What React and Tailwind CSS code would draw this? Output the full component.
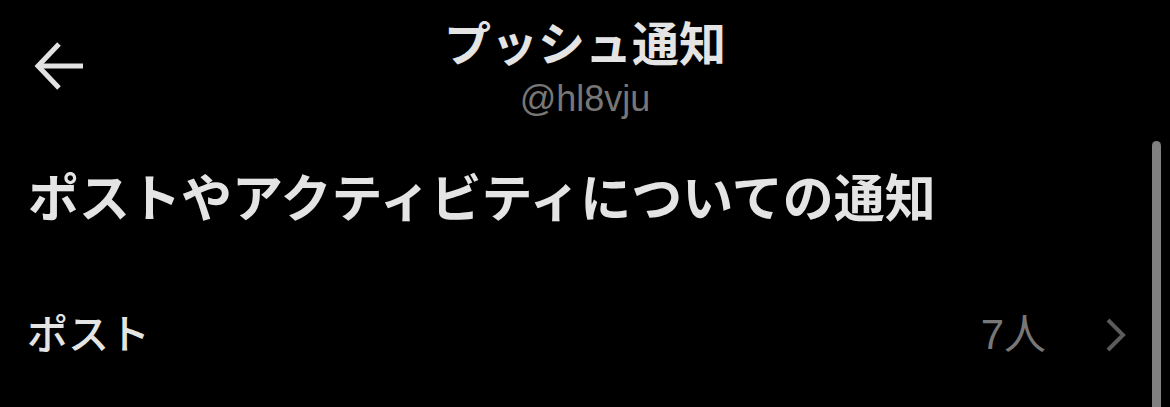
import React from 'react';

const font = { fontFamily: '"Liberation Sans", "Noto Sans CJK JP", sans-serif' };

const BackArrow = () => (
  <svg width="54" height="50" viewBox="0 0 54 50" fill="none" stroke="#e2e2e2" strokeWidth="5" strokeLinecap="butt">
    <path d="M50 24H6" />
    <path d="M26 2L5 24L26 46" />
  </svg>
);

const Chevron = () => (
  <svg width="24" height="36" viewBox="0 0 24 36" fill="none" stroke="#5b5b5b" strokeWidth="4">
    <path d="M4 3L19 18L4 33" />
  </svg>
);

export default function App() {
  return (
    <div className="relative w-[1170px] h-[407px] bg-black overflow-hidden text-[#e4e4e4]" style={font}>
      <div className="grid grid-cols-[1fr_auto_1fr] items-start pt-[16px]">
        <div className="pl-[33px] pt-[26px]">
          <BackArrow />
        </div>
        <div className="flex flex-col items-center">
          <div className="text-[47px] font-bold leading-[58px]">プッシュ通知</div>
          <div className="text-[36px] leading-[40px] text-[#777777] mt-[5px]">@hl8vju</div>
        </div>
        <div />
      </div>

      <div className="px-[28px] pt-[51px]">
        <div className="text-[51px] font-bold leading-[60px]">ポストやアクティビティについての通知</div>
      </div>

      <div className="flex items-center justify-between pl-[27px] pr-[42px] mt-[80px]">
        <div className="text-[41px] font-medium leading-[50px]">ポスト</div>
        <div className="flex items-center gap-[58px]">
          <span className="text-[42px] leading-[50px] text-[#777777]">7人</span>
          <Chevron />
        </div>
      </div>

      <div className="absolute left-[1152px] top-[141px] w-[9px] h-[280px] rounded-full bg-[#808080]" />
    </div>
  );
}
